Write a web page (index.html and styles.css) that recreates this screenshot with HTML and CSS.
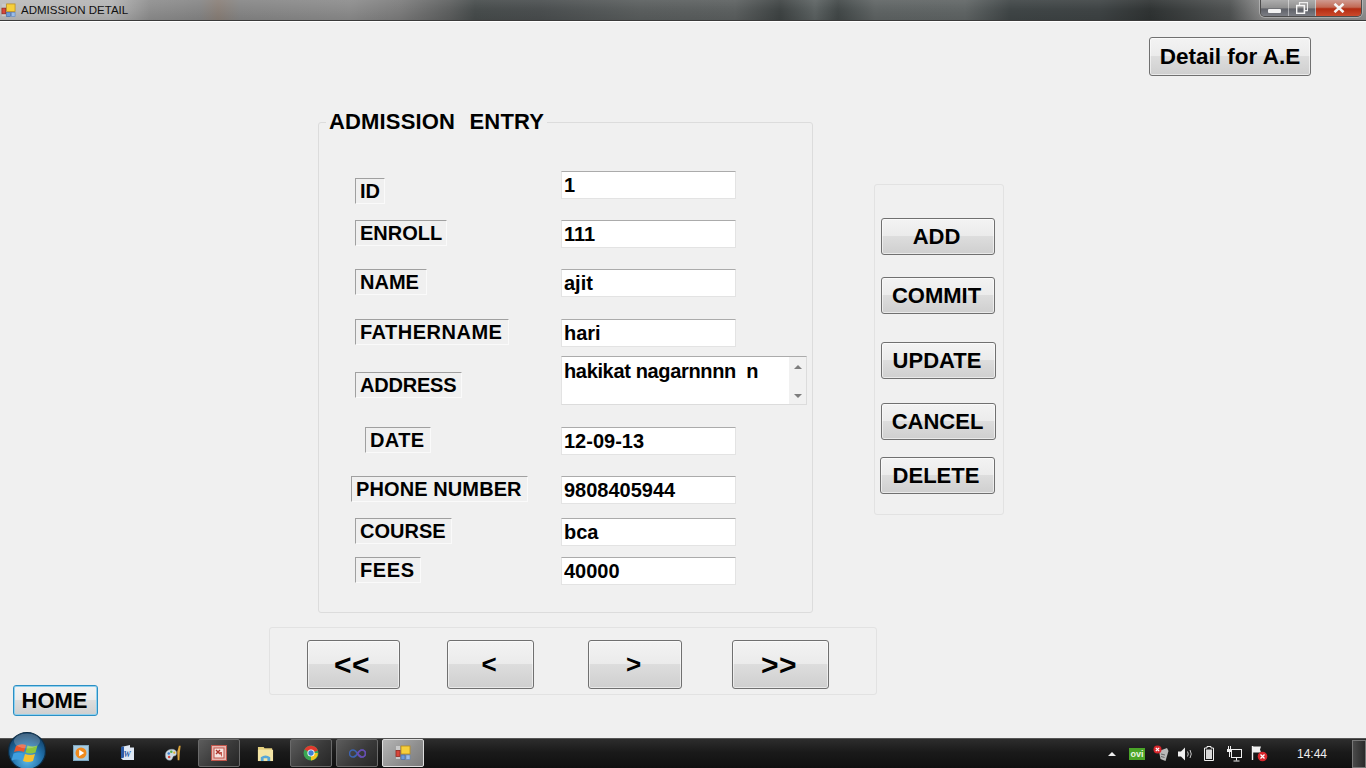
FILE: index.html
```html
<!DOCTYPE html>
<html lang="en">
<head>
<meta charset="utf-8">
<title>ADMISSION DETAIL</title>
<link rel="stylesheet" href="styles.css">
</head>
<body>
<svg class="defs" width="0" height="0" aria-hidden="true">
  <defs>
    <symbol id="app" viewBox="0 0 16 16">
      <rect x="1" y="10" width="4" height="4" fill="#c9c9c9"/>
      <rect x="1" y="1" width="4" height="4" fill="#c9c9c9"/>
      <rect x="6" y="1" width="9" height="8" fill="#f6cf3c" stroke="#b98c1c" stroke-width=".8"/>
      <rect x="1" y="5.500" width="4" height="6" fill="#d8463a" stroke="#8f2a22" stroke-width=".8"/>
      <rect x="6" y="10" width="4" height="4.500" fill="#6d9ad8" stroke="#3e66a3" stroke-width=".6"/>
      <rect x="11" y="10" width="4" height="4.500" fill="#9cbde8" stroke="#5b82bb" stroke-width=".6"/>
    </symbol>
  </defs>
</svg>
<header class="titlebar">
  <svg class="title-icon"><use href="#app"/></svg>
  <span class="title-text">ADMISSION DETAIL</span>
  <div class="winbtns">
    <div class="winbtn min"><span class="min-glyph"></span></div>
    <div class="winbtn max"><svg width="12" height="12" viewBox="0 0 12 12"><path d="M3.500 3V.6h8v8H9" fill="none" stroke="#eee" stroke-width="1.200"/><rect x=".6" y="3.600" width="7.800" height="7.800" fill="none" stroke="#f6f6f6" stroke-width="1.600"/></svg></div>
    <div class="winbtn close"><svg width="12" height="10" viewBox="0 0 12 10"><path d="M1.500 .8 10.500 9.200M10.500 .8 1.500 9.200" stroke="#f4f4f4" stroke-width="2.600"/></svg></div>
  </div>
</header>

<main class="form">
  <div class="top-row"><button class="btn detail">Detail for A.E</button></div>

  <div class="mid-row">
    <section class="group">
      <h1 class="legend">ADMISSION  ENTRY</h1>
      <div class="fields">
        <label class="lbl lbl-id">ID</label><input class="txt" value="1" readonly>
        <label class="lbl lbl-enroll">ENROLL</label><input class="txt" value="111" readonly>
        <label class="lbl lbl-name">NAME</label><input class="txt" value="ajit" readonly>
        <label class="lbl lbl-father">FATHERNAME</label><input class="txt" value="hari" readonly>
        <label class="lbl lbl-address">ADDRESS</label>
        <div class="memo">
          <div class="memo-text">hakikat nagarnnnn  n</div>
          <div class="memo-scroll"><span class="arrow-up"></span><span class="arrow-down"></span></div>
        </div>
        <label class="lbl lbl-date">DATE</label><input class="txt" value="12-09-13" readonly>
        <label class="lbl lbl-phone">PHONE NUMBER</label><input class="txt" value="9808405944" readonly>
        <label class="lbl lbl-course">COURSE</label><input class="txt" value="bca" readonly>
        <label class="lbl lbl-fees">FEES</label><input class="txt" value="40000" readonly>
      </div>
    </section>

    <aside class="side">
      <button class="btn act add">ADD</button>
      <button class="btn act commit">COMMIT</button>
      <button class="btn act update">UPDATE</button>
      <button class="btn act cancel">CANCEL</button>
      <button class="btn act delete">DELETE</button>
    </aside>
  </div>

  <div class="bottom-row">
    <button class="btn home">HOME</button>
    <nav class="nav">
      <button class="btn nv first">&lt;&lt;</button>
      <button class="btn nv prev">&lt;</button>
      <button class="btn nv next">&gt;</button>
      <button class="btn nv last">&gt;&gt;</button>
    </nav>
  </div>
</main>

<footer class="taskbar">
  <div class="orb">
    <svg width="40" height="40" viewBox="0 0 40 40">
      <defs>
        <radialGradient id="orbg" cx=".5" cy=".75" r=".7"><stop offset="0" stop-color="#5bb8e8"/><stop offset=".6" stop-color="#1f6ea8"/><stop offset="1" stop-color="#123f66"/></radialGradient>
      </defs>
      <circle cx="20" cy="20" r="18.500" fill="url(#orbg)" stroke="#0d2c44" stroke-width="1.200"/>
      <path d="M9 15q5-3 10-1l-2 7q-5-2-10 0z" fill="#e8562e"/>
      <path d="M20.500 14.500q5 2 10 0l-2 7q-5 2-10 0z" fill="#8cc63f"/>
      <path d="M6.500 22.500q5-2 10 0l-2 7q-5-2-10 0z" fill="#3f9fe0"/>
      <path d="M18 23q5 2 10 0l-2 7q-5 2-10 0z" fill="#f6c12f"/>
      <ellipse cx="20" cy="10" rx="13" ry="7.500" fill="#fff" opacity=".22"/>
    </svg>
  </div>
  <div class="tasks">
    <div class="task"><svg width="16" height="16" viewBox="0 0 16 16"><rect x=".5" y=".5" width="15" height="15" fill="#a8cbe0" stroke="#7da6bf"/><circle cx="8" cy="8" r="5.500" fill="#f08a1c"/><path d="M6.200 4.800v6.400l5-3.200z" fill="#fff"/></svg></div>
    <div class="task"><svg width="14" height="16" viewBox="0 0 14 16"><path d="M1 2 10 0v2.500h4V15H3l-2-1.500z" fill="#dfe8f4"/><path d="M1 2v11.500l3-1V1.500z" fill="#2a5aa6"/><text x="3.500" y="11.500" class="word-w">W</text></svg></div>
    <div class="task"><svg width="18" height="17" viewBox="0 0 20 20"><path d="M1 12c0-5 4-7 8-7s6 3 5 6-3 1-4 3-1 4-4 4-5-2-5-6z" fill="#cfdbe3" stroke="#7f8f9a" stroke-width=".6"/><circle cx="5" cy="10" r="1.500" fill="#3b7fd0"/><circle cx="8" cy="8" r="1.500" fill="#58b04a"/><circle cx="11.500" cy="9" r="1.300" fill="#e2b22c"/><circle cx="5.500" cy="14" r="1.500" fill="#d8463a"/><path d="M15 8 17 1h2l-1 8-.5 9H15.500z" fill="#d9a23a"/></svg></div>
    <div class="task on"><svg width="16" height="16" viewBox="0 0 16 16"><rect x=".5" y=".5" width="15" height="15" fill="#e8b6b0" stroke="#c0564c"/><rect x="3" y="3" width="10" height="10" fill="#f7e4e0" stroke="#c0564c"/><path d="M5 5l4 4M9 5 5 9" stroke="#a8322a" stroke-width="1.400"/><path d="M11 4v3H8l3 5v-4" fill="#c0564c"/></svg></div>
    <div class="task"><svg width="17" height="17" viewBox="0 0 18 18"><path d="M1 2h6l1 1.500h8V17H1z" fill="#e6d17f"/><path d="M1 5h16v12H1z" fill="#f4e5a6"/><path d="M4 17v-4q5-4 10 0v4h-3v-3H7v3z" fill="#58a7d8"/></svg></div>
    <div class="task on"><svg width="16" height="16" viewBox="0 0 16 16"><circle cx="8" cy="8" r="7.500" fill="#3aa552"/><path d="M8 8H14.900A7.500 7.500 0 0 1 8 15.500z" fill="#f2c21d"/><path d="M8 8 1.400 4.500A7.500 7.500 0 0 1 14.900 5.500z" fill="#e0392f"/><circle cx="8" cy="8" r="3.600" fill="#fff"/><circle cx="8" cy="8" r="2.700" fill="#3d7fd6"/></svg></div>
    <div class="task on"><svg width="17" height="9" viewBox="0 0 17 9"><path d="M8.500 4.500C7 2 5.500 1 4 1a3.500 3.500 0 0 0 0 7c1.500 0 3-1 4.500-3.500S11.500 1 13 1a3.500 3.500 0 0 1 0 7c-1.500 0-3-1-4.500-3.500z" fill="none" stroke="#3d63b0" stroke-width="1.600"/><path d="M8.500 4.500C10 2 11.500 1 13 1a3.500 3.500 0 0 1 0 7c-1.500 0-3-1-4.500-3.500z" fill="none" stroke="#6c4bb0" stroke-width="1.600"/></svg></div>
    <div class="task on active"><svg class="task-app"><use href="#app"/></svg></div>
  </div>
  <div class="tray">
    <span class="tray-arrow"></span>
    <span class="ovi">ovi</span>
    <div class="tray-item tools"><svg width="16" height="18" viewBox="0 0 16 18"><path d="M6 6 14 3l1.500 3-3 10-5-2z" fill="#b9b9b9"/><path d="M8 9l4 1M8 11.500l3.500 1" stroke="#666"/><circle cx="4.500" cy="4.500" r="4" fill="#d8262c"/><path d="M2.800 2.800l3.400 3.400M6.200 2.800 2.800 6.200" stroke="#fff" stroke-width="1.200"/></svg></div>
    <div class="tray-item vol"><svg width="16" height="14" viewBox="0 0 16 14"><path d="M0 4.500h3L7 .5v13L3 9.500H0z" fill="#f0f0f0"/><path d="M9.500 4.500q1.500 2.500 0 5M12 3q2.500 4 0 8" fill="none" stroke="#c8c8c8"/></svg></div>
    <div class="tray-item batt"><svg width="10" height="15" viewBox="0 0 10 15"><path d="M3 .5h4v1.500h2.500v12.500H.5V2H3z" fill="none" stroke="#f0f0f0"/><rect x="2" y="3.500" width="6" height="9.500" fill="#d8d8d8"/></svg></div>
    <div class="tray-item net"><svg width="15" height="16" viewBox="0 0 15 16"><rect x="4.500" y="3.500" width="10" height="8" fill="none" stroke="#f0f0f0"/><path d="M9.500 11.500v3M6.500 15h6" stroke="#f0f0f0"/><rect x="1" y="0" width="1" height="3" fill="#f0f0f0"/><rect x="3" y="0" width="1" height="3" fill="#f0f0f0"/><rect x="0" y="3" width="5" height="3" fill="#f0f0f0"/><rect x="2" y="6" width="1" height="5" fill="#f0f0f0"/></svg></div>
    <div class="tray-item flag"><svg width="17" height="17" viewBox="0 0 17 17"><path d="M1.500 1v14" stroke="#f0f0f0" stroke-width="1.400"/><path d="M2 1.500h8l-1 3 1 3H2z" fill="#f0f0f0"/><circle cx="11.500" cy="11.500" r="4.800" fill="#d8262c"/><path d="M9.500 9.500l4 4M13.500 9.500l-4 4" stroke="#fff" stroke-width="1.300"/></svg></div>
    <time class="clock">14:44</time>
    <div class="show-desktop"></div>
  </div>
</footer>
</body>
</html>
```
FILE: styles.css
```css
* { box-sizing: border-box; }
html, body { margin: 0; height: 100%; }
body {
  width: 1366px;
  height: 768px;
  overflow: hidden;
  background: #f0f0f0;
  display: flex;
  flex-direction: column;
  font-family: "Liberation Sans", Arial, sans-serif;
  color: #000;
}
.defs { position: absolute; }

/* title bar */
.titlebar {
  height: 21px;
  flex: none;
  display: flex;
  align-items: center;
  border-bottom: 1px solid #3a3a3a;
  box-shadow: 0 1px 0 #fff;
  background:
    linear-gradient(180deg, rgba(255,255,255,.08), rgba(255,255,255,0) 50%, rgba(0,0,0,.08)),
    linear-gradient(90deg, #bcbcbc 0, #b4b4b4 110px, #8e8e8e 150px, #868686 200px, #8a8078 218px, #868686 240px, #8c8c8c 350px, #7c7c7c 400px, #5d5f5f 450px, #474c4c 475px, #4a4e4f 540px, #5a5e5e 640px, #5c6060 735px, #3e4343 780px, #5c6262 815px, #424848 838px, #5f6464 875px, #606565 965px, #3f4546 1010px, #3e4344 1100px, #2f3333 1150px, #4f5252 1230px, #8a8a8a 1262px, #8e8e8e 1366px);
}
.title-icon { width: 15px; height: 15px; margin: 0 5px 0 1px; flex: none; }
.title-text { font-size: 11.500px; color: #111; white-space: nowrap; }
.winbtns { margin-left: auto; margin-right: 4px; display: flex; align-self: flex-start; height: 17px; border: 1px solid #4c4c4c; border-top: 0; border-radius: 0 0 5px 5px; overflow: hidden; box-shadow: 0 0 0 1px rgba(255,255,255,.3); }
.winbtn { display: flex; align-items: center; justify-content: center; border-right: 1px solid rgba(255,255,255,.45); }
.winbtn.min { width: 28px; }
.winbtn.max { width: 27px; }
.winbtn.min, .winbtn.max { background: linear-gradient(180deg, #adadad, #8f8f8f 50%, #5f6168 55%, #7b7d84); }
.winbtn.close { width: 45px; border-right: 0; background: linear-gradient(180deg, #cf9a90, #c26a55 45%, #b32c12 55%, #cc4a2c); }
.min-glyph { width: 13px; height: 4px; background: #f2f2f2; margin-top: 5px; border-radius: 1px; }

/* form canvas */
.form { flex: 1; min-height: 0; padding-top: 16px; }
.top-row { display: flex; justify-content: flex-end; padding-right: 55px; }
.btn {
  font-family: inherit;
  font-weight: bold;
  font-size: 21px;
  color: #000;
  padding: 0;
  border: 1px solid #707070;
  border-radius: 3px;
  background: linear-gradient(180deg, #f3f3f3 0, #ebebeb 49%, #dddddd 50%, #cfcfcf 100%);
  box-shadow: inset 0 0 0 1px rgba(255,255,255,.55);
  white-space: pre;
}
.detail { width: 162px; height: 39px; font-size: 22.500px; }

.mid-row { display: flex; align-items: flex-start; margin-top: 46px; margin-left: 318px; }
.group {
  position: relative;
  width: 495px;
  height: 491px;
  border: 1px solid #dcdcdc;
  border-radius: 3px;
  padding: 48px 0 0 36px;
}
.legend {
  position: absolute;
  left: 7px;
  top: -14px;
  margin: 0;
  padding: 0 3px;
  background: #f0f0f0;
  font-size: 22px;
  font-weight: bold;
  letter-spacing: .15px;
  word-spacing: 1px;
  line-height: 25px;
  white-space: pre;
}
.fields {
  display: grid;
  grid-template-columns: 206px auto;
  grid-template-rows: 49px 49px 50px 37px 71px 49px 42px 39px 28px;
  justify-items: start;
  align-items: start;
}
.lbl {
  height: 26px;
  padding-left: 4px;
  border: 1px solid;
  border-color: #a0a0a0 #fafafa #fafafa #a0a0a0;
  font-size: 20px;
  font-weight: bold;
  line-height: 24px;
  white-space: nowrap;
}
.lbl-id { width: 30px; margin-top: 7px; }
.lbl-enroll { width: 92px; }
.lbl-name { width: 72px; }
.lbl-father { width: 154px; letter-spacing: .5px; }
.lbl-address { width: 107px; margin-top: 16px; letter-spacing: -.2px; }
.lbl-date { width: 66px; margin-left: 10px; letter-spacing: .4px; }
.lbl-phone { width: 177px; margin-left: -4px; letter-spacing: .1px; }
.lbl-course { width: 97px; }
.lbl-fees { width: 66px; letter-spacing: .6px; }
.txt {
  width: 175px;
  height: 28px;
  padding: 0 2px;
  border: 1px solid;
  border-color: #ababab #e3e3e3 #e3e3e3 #e3e3e3;
  background: #fff;
  font-family: inherit;
  font-size: 20px;
  font-weight: bold;
  color: #000;
  outline: 0;
}
.memo {
  width: 246px;
  height: 49px;
  display: flex;
  border: 1px solid;
  border-color: #ababab #dcdcdc #dcdcdc #e3e3e3;
  background: #fff;
}
.memo-text { flex: 1; padding: 2px 2px 0; font-size: 20px; font-weight: bold; letter-spacing: -.35px; line-height: 24px; white-space: pre; }
.memo-scroll { width: 17px; background: #f1f1f1; display: flex; flex-direction: column; align-items: center; justify-content: space-between; padding: 8px 0 6px; }
.arrow-up, .arrow-down { width: 0; height: 0; border-left: 4px solid transparent; border-right: 4px solid transparent; }
.arrow-up { border-bottom: 4px solid #7d7d7d; }
.arrow-down { border-top: 4px solid #7d7d7d; }

/* command panel */
.side {
  width: 130px;
  height: 331px;
  margin-top: 62px;
  margin-left: 61px;
  border: 1px solid #e2e2e2;
  border-radius: 3px;
  padding-top: 33px;
  display: flex;
  flex-direction: column;
  align-items: flex-start;
}
.act { height: 37px; width: 114px; margin-left: 6px; padding-right: 3px; font-size: 22px; }
.commit { margin-top: 22px; }
.update { margin-top: 28px; width: 115px; }
.cancel { margin-top: 24px; width: 115px; padding-right: 2px; }
.delete { margin-top: 17px; width: 115px; margin-left: 5px; }

/* bottom row */
.bottom-row { display: flex; align-items: flex-start; margin-top: 14px; padding-left: 13px; }
.home {
  width: 85px;
  height: 31px;
  margin-top: 58px;
  padding-right: 2px;
  border-color: #2b8fc4;
  box-shadow: inset 0 0 0 1px #8fd0ee;
  font-size: 22px;
}
.nav {
  width: 608px;
  height: 68px;
  margin-left: 171px;
  border: 1px solid #e2e2e2;
  border-radius: 3px;
  padding: 12px 0 0 37px;
  display: flex;
  align-items: flex-start;
}
.nv { height: 49px; font-size: 26px; padding-right: 3px; }
.first { width: 93px; font-size: 30px; letter-spacing: .5px; }
.prev { width: 87px; margin-left: 47px; }
.next { width: 94px; margin-left: 54px; }
.last { width: 97px; margin-left: 50px; font-size: 30px; letter-spacing: .5px; }

/* taskbar */
.taskbar {
  position: relative;
  flex: none;
  height: 30px;
  display: flex;
  background: linear-gradient(180deg, #2d2d2d 0, #1a1a1a 45%, #101010 100%);
  border-top: 1px solid #555;
  color: #f0f0f0;
}
.orb { position: absolute; left: 7px; top: -8px; width: 40px; height: 40px; }
.tasks { display: flex; margin-left: 58px; }
.task { width: 42px; height: 28px; margin: 0 2px; display: flex; align-items: center; justify-content: center; border-radius: 2px; }
.task.on { border: 1px solid #6a6a6a; background: linear-gradient(135deg, #5c5c5c, #3a3a3a 55%, #262626); }
.task.active { border-color: #ddd; background: linear-gradient(135deg, #b5b5b5, #8e8e8e 60%, #7a7a7a); }
.task-app { width: 16px; height: 16px; }
.word-w { font: italic bold 8px "Liberation Serif", serif; fill: #2a5aa6; }
.tray { margin-left: auto; display: flex; align-items: center; height: 100%; }
.tray-arrow { width: 0; height: 0; border-left: 4px solid transparent; border-right: 4px solid transparent; border-bottom: 4px solid #eee; margin-right: 13px; }
.ovi { width: 16px; height: 12px; background: #4aa528; color: #e8f5e0; font-size: 9px; font-weight: bold; line-height: 12px; text-align: center; margin-right: 2px; }
.tray-item { display: flex; align-items: center; justify-content: center; }
.tools { width: 28px; }
.vol { width: 22px; }
.batt { width: 24px; }
.net { width: 26px; }
.flag { width: 24px; }
.clock { width: 70px; margin-left: 6px; text-align: center; font-size: 12px; color: #eee; }
.show-desktop { width: 14px; height: 28px; margin-left: 5px; background: linear-gradient(90deg, #4a4a4a, #2a2a2a); border: 1px solid #777; }
```
